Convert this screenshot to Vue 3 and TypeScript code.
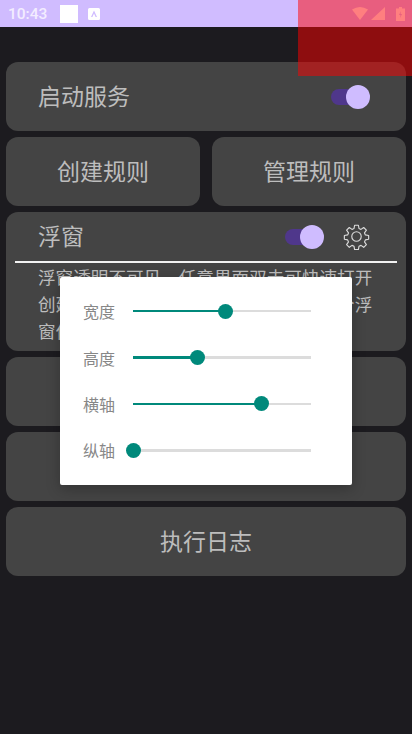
<script setup lang="ts">
interface SliderRow {
  label: string
  percent: number
}

const sliders: SliderRow[] = [
  { label: '宽度', percent: 51.9 },
  { label: '高度', percent: 36.5 },
  { label: '横轴', percent: 72.1 },
  { label: '纵轴', percent: 0 },
]
</script>

<template>
  <div class="screen">
    <header class="status">
      <span class="time">10:43</span>
      <span class="note-square"></span>
      <span class="note-a"><svg viewBox="0 0 12 12" width="12" height="12"><path d="M0 1.5A1.5 1.5 0 0 1 1.5 0h9A1.5 1.5 0 0 1 12 1.5v9a1.5 1.5 0 0 1-1.5 1.5h-9A1.5 1.5 0 0 1 0 10.500zM6 2.500 3 9h1.400L6 5.500 7.600 9H9z" fill="#fff" fill-rule="evenodd" /></svg></span>
      <span class="status-right">
        <svg viewBox="0 0 16 13" width="16" height="13"><path d="M0 2.500Q8-2.500 16 2.500L8 13z" fill="#fff" /></svg>
        <svg viewBox="0 0 14 13" width="14" height="13"><path d="M14 0v13H0z" fill="#fff" /></svg>
        <svg class="battery" viewBox="0 0 9 14" width="9" height="14"><path d="M3 0h3v1.500h3V14H0V1.500h3z" fill="#fff" /><path d="M5 4 3 8h1.500L4 11l2-4H4.500z" fill="#d0bcff" /></svg>
      </span>
    </header>

    <main class="content">
      <section class="card row-card">
        <span class="title">启动服务</span>
        <span class="switch"><span class="switch-track"></span><span class="switch-thumb"></span></span>
      </section>

      <div class="pair">
        <button class="card action">创建规则</button>
        <button class="card action">管理规则</button>
      </div>

      <section class="card float-card">
        <div class="float-head">
          <span class="title">浮窗</span>
          <span class="switch"><span class="switch-track"></span><span class="switch-thumb"></span></span>
          <svg class="gear" viewBox="0 0 24 24" width="27" height="27" fill="none" stroke="#dcdcdc" stroke-width="1" stroke-linejoin="round">
            <circle cx="12" cy="12" r="4.200" />
            <path d="M10.300 2h3.400l.5 2.900 1.800.8 2.400-1.700 2.400 2.400-1.700 2.400.8 1.800 2.900.5v3.400l-2.900.5-.8 1.800 1.700 2.400-2.400 2.400-2.400-1.700-1.800.8-.5 2.900h-3.400l-.5-2.900-1.800-.8-2.400 1.700-2.400-2.400 1.700-2.400-.8-1.800-2.900-.5v-3.400l2.900-.5.8-1.800L3.200 6.400l2.400-2.400 2.400 1.700 1.800-.8z" />
          </svg>
        </div>
        <div class="divider"></div>
        <p class="desc">浮窗透明不可见，任意界面双击可快速打开创建规则页面，也可以在设置中调整这个浮窗位置</p>
      </section>

      <button class="card action wide"></button>
      <button class="card action wide"></button>
      <button class="card action wide">执行日志</button>
    </main>

    <div class="dialog">
      <div v-for="row in sliders" :key="row.label" class="slider-row">
        <span class="slider-label">{{ row.label }}</span>
        <div class="slider">
          <div class="slider-fill" :style="{ width: row.percent + '%' }"></div>
          <div class="slider-thumb" :style="{ left: row.percent + '%' }"></div>
        </div>
      </div>
    </div>

    <div class="red-overlay"></div>
  </div>
</template>

<style>
html, body { margin: 0; background: #1c1b1f; }
</style>

<style scoped>
.screen {
  position: relative;
  width: 412px;
  height: 734px;
  overflow: hidden;
  background: #1c1b1f;
  font-family: "Noto Sans CJK SC", "Noto Sans", sans-serif;
}
.status {
  height: 27px;
  background: #d0bcff;
  display: flex;
  align-items: center;
  padding: 0 7px 0 8px;
  box-sizing: border-box;
}
.time {
  font: 500 15.500px Roboto, sans-serif;
  color: #f3edff;
  width: 52px;
}
.note-square {
  width: 18px;
  height: 18px;
  background: #fff;
  margin-right: 10px;
}
.note-a { display: flex; }
.status-right {
  margin-left: auto;
  display: flex;
  align-items: center;
  gap: 3px;
}
.battery { margin-left: 8px; }
.content {
  display: flex;
  flex-direction: column;
  gap: 6px;
  padding: 35px 6px 0;
}
.card {
  background: #444444;
  border-radius: 12px;
  color: #bdbdbd;
  border: 0;
  margin: 0;
  font-family: inherit;
}
.row-card {
  height: 69px;
  display: flex;
  align-items: center;
  justify-content: space-between;
  padding: 0 36px 0 32px;
  box-sizing: border-box;
}
.title {
  font-size: 23px;
  line-height: 30px;
  margin-bottom: 4px;
}
.switch {
  position: relative;
  display: block;
  width: 39px;
  height: 24px;
  flex: none;
}
.switch-track {
  position: absolute;
  left: 0;
  right: 5px;
  top: 4px;
  height: 16px;
  border-radius: 8px;
  background: #4f378b;
}
.switch-thumb {
  position: absolute;
  right: 0;
  top: 0;
  width: 24px;
  height: 24px;
  border-radius: 50%;
  background: #cfbcff;
}
.pair {
  display: flex;
  gap: 12px;
}
.action {
  flex: 1;
  height: 69px;
  font-size: 23px;
  padding: 0 0 4px;
}
.wide {
  flex: none;
  width: 100%;
}
.float-card {
  height: 139px;
  padding: 0 9px;
  box-sizing: border-box;
}
.float-head {
  height: 49px;
  display: flex;
  align-items: center;
  padding: 0 27px 0 23px;
  box-sizing: border-box;
}
.float-head .title { margin-right: auto; }
.gear { margin-left: 19px; flex: none; }
.divider {
  height: 2px;
  background: #f2f2f2;
}
.desc {
  margin: 0;
  padding: 0 24px 0 23px;
  font-size: 17.600px;
  line-height: 27px;
  color: #bdbdbd;
}
.dialog {
  position: absolute;
  left: 60px;
  top: 277px;
  width: 292px;
  height: 208px;
  background: #fff;
  border-radius: 2px;
  box-shadow: 0 4px 14px rgba(0, 0, 0, 0.25);
  padding: 11px 41px 0 23px;
  box-sizing: border-box;
}
.slider-row {
  height: 46.400px;
  display: flex;
  align-items: center;
}
.slider-label {
  width: 50px;
  flex: none;
  font-size: 16px;
  color: #878787;
}
.slider {
  position: relative;
  flex: 1;
  height: 2.500px;
  background: #dcdcdc;
}
.slider-fill {
  height: 100%;
  background: #00897b;
}
.slider-thumb {
  position: absolute;
  top: 50%;
  width: 15px;
  height: 15px;
  margin: -7.500px 0 0 -7.500px;
  border-radius: 50%;
  background: #00897b;
}
.red-overlay {
  position: absolute;
  right: 0;
  top: 0;
  width: 114px;
  height: 76px;
  background: rgba(255, 0, 0, 0.5);
}
</style>
